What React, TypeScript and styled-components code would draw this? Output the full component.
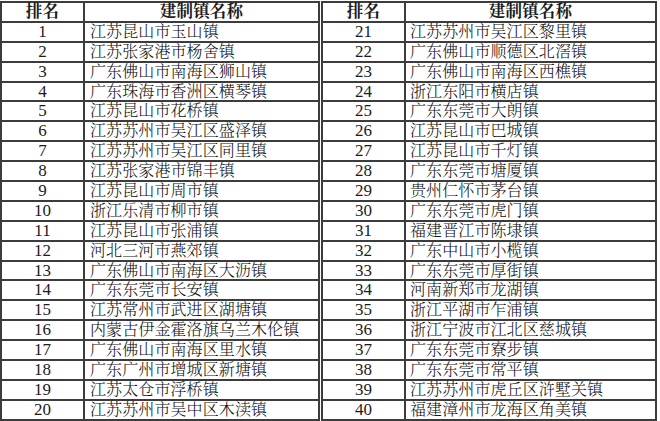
import React from "react";
import styled, { createGlobalStyle } from "styled-components";

const GlobalStyle = createGlobalStyle`
  html, body {
    margin: 0;
    padding: 0;
    background: #ffffff;
  }
`;

const LINE = "#3c3c3c";
const TEXT = "#1c1c1c";
const FONT = `"Liberation Serif", "Noto Serif CJK SC", "Noto Sans CJK SC", serif`;

const Page = styled.div`
  display: flex;
  align-items: flex-start;
  gap: 1px;
  padding-top: 1px;
  width: 660px;
  height: 421px;
  overflow: hidden;
`;

const Table = styled.table<{ width: number }>`
  width: ${({ width }) => width}px;
  border-collapse: collapse;
  table-layout: fixed;
  font-family: ${FONT};
  color: ${TEXT};
`;

const Row = styled.tr`
  height: 19.9px;
`;

const HeadCell = styled.th`
  border: 2px solid ${LINE};
  padding: 0;
  font-size: 16.5px;
  font-weight: 700;
  letter-spacing: 0.2px;
  text-align: center;
  line-height: 16px;
`;

const RankCell = styled.td`
  border: 2px solid ${LINE};
  padding: 0;
  font-size: 17px;
  text-align: center;
  line-height: 16px;
`;

const NameCell = styled.td<{ indent: number }>`
  border: 2px solid ${LINE};
  padding: 0 0 0 ${({ indent }) => indent}px;
  font-size: 16px;
  font-weight: 300;
  color: #111111;
  letter-spacing: 0.1px;
  white-space: nowrap;
  overflow: hidden;
  line-height: 16px;
`;

const left = [
  "江苏昆山市玉山镇",
  "江苏张家港市杨舍镇",
  "广东佛山市南海区狮山镇",
  "广东珠海市香洲区横琴镇",
  "江苏昆山市花桥镇",
  "江苏苏州市吴江区盛泽镇",
  "江苏苏州市吴江区同里镇",
  "江苏张家港市锦丰镇",
  "江苏昆山市周市镇",
  "浙江乐清市柳市镇",
  "江苏昆山市张浦镇",
  "河北三河市燕郊镇",
  "广东佛山市南海区大沥镇",
  "广东东莞市长安镇",
  "江苏常州市武进区湖塘镇",
  "内蒙古伊金霍洛旗乌兰木伦镇",
  "广东佛山市南海区里水镇",
  "广东广州市增城区新塘镇",
  "江苏太仓市浮桥镇",
  "江苏苏州市吴中区木渎镇",
];

const right = [
  "江苏苏州市吴江区黎里镇",
  "广东佛山市顺德区北滘镇",
  "广东佛山市南海区西樵镇",
  "浙江东阳市横店镇",
  "广东东莞市大朗镇",
  "江苏昆山市巴城镇",
  "江苏昆山市千灯镇",
  "广东东莞市塘厦镇",
  "贵州仁怀市茅台镇",
  "广东东莞市虎门镇",
  "福建晋江市陈埭镇",
  "广东中山市小榄镇",
  "广东东莞市厚街镇",
  "河南新郑市龙湖镇",
  "浙江平湖市乍浦镇",
  "浙江宁波市江北区慈城镇",
  "广东东莞市寮步镇",
  "广东东莞市常平镇",
  "江苏苏州市虎丘区浒墅关镇",
  "福建漳州市龙海区角美镇",
];

type RankTableProps = {
  names: string[]
  start: number
  width: number
  rankWidth: number
  indent: number
};

const RankTable = ({ names, start, width, rankWidth, indent }: RankTableProps) => (
  <Table width={ width }>
    <colgroup>
      <col style={{ width: rankWidth }}/>
      <col/>
    </colgroup>
    <thead>
    <Row>
      <HeadCell>排名</HeadCell>
      <HeadCell>建制镇名称</HeadCell>
    </Row>
    </thead>
    <tbody>
    {
      names.map((name, index) =>
        <Row key={ name }>
          <RankCell>{ start + index }</RankCell>
          <NameCell indent={ indent }>{ name }</NameCell>
        </Row>
      )
    }
    </tbody>
  </Table>
);

const App = () => (
  <>
    <GlobalStyle/>
    <Page>
      <RankTable names={ left } start={ 1 } width={ 320 } rankWidth={ 83 } indent={ 5 }/>
      <RankTable names={ right } start={ 21 } width={ 336 } rankWidth={ 83 } indent={ 4 }/>
    </Page>
  </>
);

export default App;
